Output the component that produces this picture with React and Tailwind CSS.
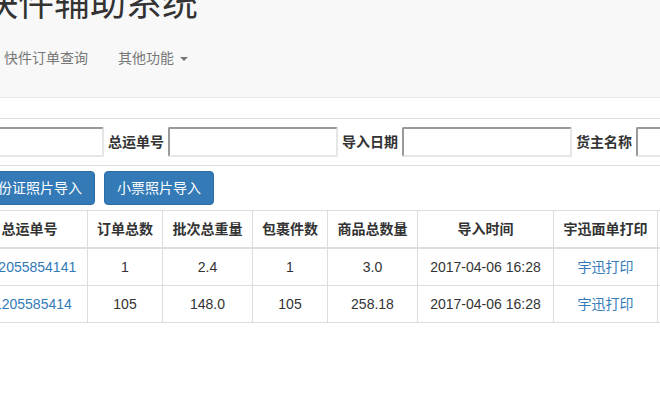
const rows = [
  { no: "102055854141", orders: "1", weight: "2.4", parcels: "1", goods: "3.0", time: "2017-04-06 16:28" },
  { no: "11205585414", orders: "105", weight: "148.0", parcels: "105", goods: "258.18", time: "2017-04-06 16:28" },
];

const inputCls =
  "w-[170px] h-[30px] bg-white border-2 border-solid border-t-[#999] border-l-[#999] border-r-[#e6e6e6] border-b-[#e6e6e6] rounded-[2px] outline-none";

function Field({ label }) {
  return (
    <>
      <span className="ml-[4px] font-bold text-[14px] leading-[20px] whitespace-nowrap">{label}</span>
      <input className={`ml-[4px] ${inputCls}`} />
    </>
  );
}

export default function App() {
  return (
    <div className="w-[660px] h-[404px] overflow-hidden bg-white font-['Liberation_Sans','Noto_Sans_CJK_SC',sans-serif] text-[14px] text-[#333]">
      <div className="w-[1400px]">
        <div className="flex flex-col h-[98px] bg-[#f8f8f8] border-b border-[#e7e7e7]">
          <div className="-mt-[14px] -ml-[18px] text-[36px] leading-[36px] text-[#333]">快件辅助系统</div>
          <ul className="mt-[11px] -ml-[11px] flex text-[#777] leading-[20px]">
            <li className="p-[15px]">快件订单查询</li>
            <li className="p-[15px] flex items-center">
              其他功能
              <span className="ml-[6px] mt-[2px] inline-block w-0 h-0 border-t-[4px] border-x-[4px] border-t-[#777] border-x-transparent" />
            </li>
          </ul>
        </div>

        <div className="mt-[20px] border-t border-b border-[#ddd] py-[8px]">
          <div className="flex items-center -ml-[66px]">
            <input className={inputCls} />
            <Field label="总运单号" />
            <Field label="导入日期" />
            <Field label="货主名称" />
          </div>
        </div>

        <div className="mt-[5px] -ml-[29px] flex gap-[9px]">
          <button className="px-[12px] py-[6px] leading-[20px] border border-[#2e6da4] bg-[#337ab7] text-white rounded-[4px]">身份证照片导入</button>
          <button className="px-[12px] py-[6px] leading-[20px] border border-[#2e6da4] bg-[#337ab7] text-white rounded-[4px]">小票照片导入</button>
        </div>

        <table className="mt-[5px] -ml-[29px] border-collapse table-fixed">
          <thead>
            <tr>
              {[
                ["总运单号", "w-[116px]"],
                ["订单总数", "w-[75px]"],
                ["批次总重量", "w-[90px]"],
                ["包裹件数", "w-[75px]"],
                ["商品总数量", "w-[90px]"],
                ["导入时间", "w-[136px]"],
                ["宇迅面单打印", "w-[104px]"],
                ["操作", "w-[120px]"],
              ].map(([h, w]) => (
                <th key={h} className={`${w} border border-b-2 border-[#ddd] p-[8px] leading-[20px] font-bold text-center whitespace-nowrap`}>
                  {h}
                </th>
              ))}
            </tr>
          </thead>
          <tbody>
            {rows.map((r) => (
              <tr key={r.no}>
                <td className="border border-[#ddd] p-[8px] leading-[20px] text-center whitespace-nowrap">
                  <a className="text-[#337ab7]">{r.no}</a>
                </td>
                <td className="border border-[#ddd] p-[8px] leading-[20px] text-center">{r.orders}</td>
                <td className="border border-[#ddd] p-[8px] leading-[20px] text-center">{r.weight}</td>
                <td className="border border-[#ddd] p-[8px] leading-[20px] text-center">{r.parcels}</td>
                <td className="border border-[#ddd] p-[8px] leading-[20px] text-center">{r.goods}</td>
                <td className="border border-[#ddd] p-[8px] leading-[20px] text-center whitespace-nowrap">{r.time}</td>
                <td className="border border-[#ddd] p-[8px] leading-[20px] text-center whitespace-nowrap">
                  <a className="text-[#337ab7]">宇迅打印</a>
                </td>
                <td className="border border-[#ddd] p-[8px] leading-[20px] text-center whitespace-nowrap">
                  <a className="text-[#337ab7]">删除</a>
                </td>
              </tr>
            ))}
          </tbody>
        </table>
      </div>
    </div>
  );
}
